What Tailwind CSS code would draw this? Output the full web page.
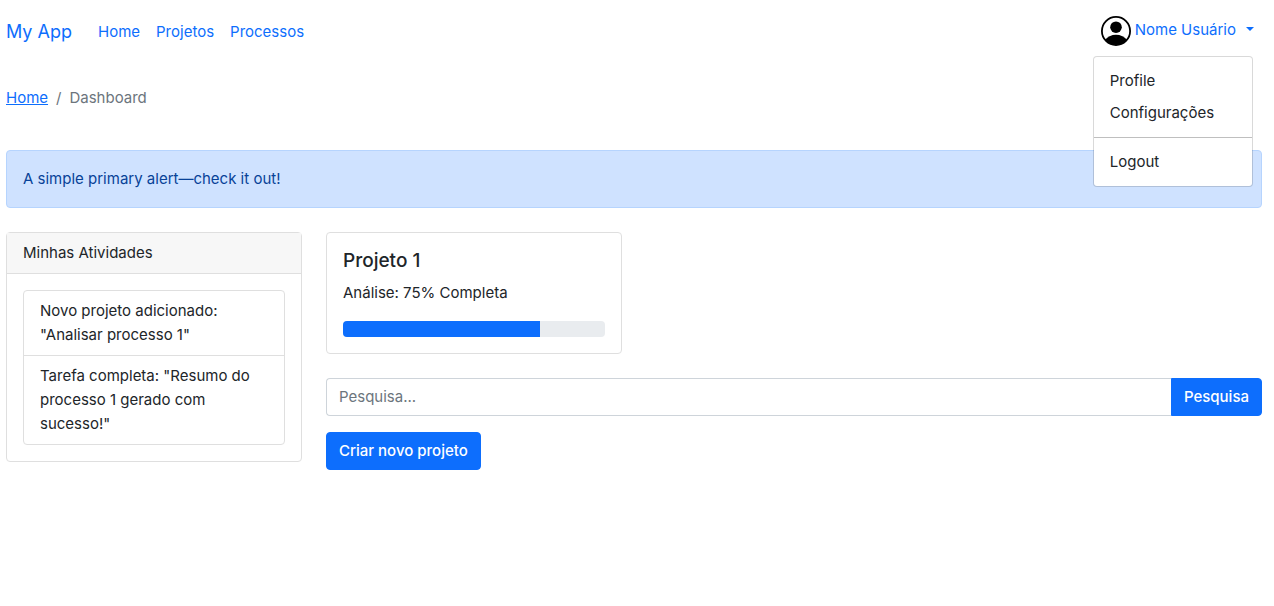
<!DOCTYPE html>
<html lang="pt-BR">
<head>
<meta charset="utf-8">
<meta name="viewport" content="width=device-width, initial-scale=1">
<title>My App</title>
<script src="https://cdn.jsdelivr.net/npm/@tailwindcss/browser@4"></script>
</head>
<body class="bg-white font-['Inter','Liberation_Sans',sans-serif] text-[15px] leading-6 text-[#212529]">
<div class="pr-3 pl-[6px]">
  <header class="flex items-start justify-between pt-2">
    <nav class="flex items-center pt-1 text-[#0d6efd]">
      <a href="#" class="mr-[18px] text-lg">My App</a>
      <a href="#" class="p-2">Home</a>
      <a href="#" class="p-2">Projetos</a>
      <a href="#" class="p-2">Processos</a>
    </nav>
    <div class="relative">
      <button type="button" aria-haspopup="true" aria-expanded="true" class="flex h-[46px] items-start gap-1 px-2 pt-2 text-[#0d6efd]">
        <svg viewBox="0 0 30 30" class="size-[30px]" aria-hidden="true">
          <defs><clipPath id="disc"><circle cx="15" cy="15" r="14"/></clipPath></defs>
          <circle cx="15" cy="15" r="14.1" fill="#fff" stroke="#000" stroke-width="1.8"/>
          <circle cx="15" cy="11.2" r="5.8" fill="#000"/>
          <path clip-path="url(#disc)" d="M3.6 24.5C6.2 20.700 10.600 18.700 15 18.700S23.800 20.700 26.400 24.500L24 30H6Z" fill="#000"/>
        </svg>
        <span class="pt-[2px]">Nome Usuário</span>
        <span class="mt-[11px] ml-[6px] border-x-4 border-t-4 border-x-transparent border-t-[#0d6efd]"></span>
      </button>
      <div class="absolute top-12 left-0 z-10 w-40 rounded border border-black/15 bg-white bg-clip-padding py-2">
        <a href="#" class="block px-4 py-1">Profile</a>
        <a href="#" class="block px-4 py-1">Configurações</a>
        <hr class="my-2 border-t border-black/25">
        <a href="#" class="block px-4 py-1">Logout</a>
      </div>
    </div>
  </header>

  <nav aria-label="breadcrumb" class="mt-8 flex gap-2 text-[#6c757d]">
    <a href="#" class="text-[#0d6efd] underline">Home</a>
    <span>/</span>
    <span>Dashboard</span>
  </nav>

  <div role="alert" class="mt-10 rounded border border-[#b6d4fe] bg-[#cfe2ff] p-4 text-[#084298]">A simple primary alert—check it out!</div>

  <main class="mt-6 grid grid-cols-4 items-start gap-6">
    <section class="rounded border border-[#dfdfdf]">
      <h2 class="border-b border-[#dfdfdf] bg-[#f7f7f7] px-4 py-2">Minhas Atividades</h2>
      <div class="p-4">
        <ul class="divide-y divide-[#dfdfdf] rounded border border-[#dfdfdf]">
          <li class="px-4 py-2">Novo projeto adicionado: "Analisar processo 1"</li>
          <li class="px-4 py-2">Tarefa completa: "Resumo do processo 1 gerado com sucesso!"</li>
        </ul>
      </div>
    </section>
    <div class="col-span-3">
      <div class="grid grid-cols-3 gap-6">
        <section class="rounded border border-[#dfdfdf] p-4">
          <h3 class="mb-2 text-[19px] leading-6 font-medium">Projeto 1</h3>
          <p class="mb-4">Análise: 75% Completa</p>
          <div role="progressbar" aria-label="Análise" aria-valuenow="75" aria-valuemin="0" aria-valuemax="100" class="h-4 overflow-hidden rounded bg-[#e9ecef]">
            <div class="h-full bg-[#0d6efd]" style="width:75%"></div>
          </div>
        </section>
      </div>
      <form class="mt-6 flex">
        <input type="search" aria-label="Pesquisa" placeholder="Pesquisa..." class="min-w-0 flex-1 rounded-l border border-r-0 border-[#ced4da] px-3 py-[6px] placeholder:text-[#6c757d]">
        <button type="button" class="rounded-r border border-[#0d6efd] bg-[#0d6efd] px-3 py-[6px] font-medium text-white">Pesquisa</button>
      </form>
      <button type="button" class="mt-4 rounded border border-[#0d6efd] bg-[#0d6efd] px-3 py-[6px] font-medium text-white">Criar novo projeto</button>
    </div>
  </main>
</div>
</body>
</html>
